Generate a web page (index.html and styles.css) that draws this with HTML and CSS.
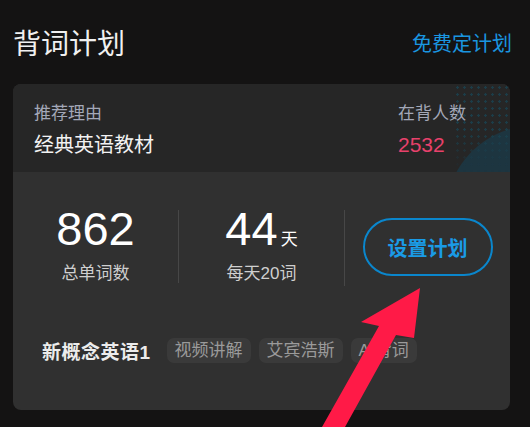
FILE: index.html
```html
<!DOCTYPE html>
<html>
<head>
   <meta charset="utf-8">
   <title>背词计划</title>
   <link rel="stylesheet" href="styles.css">
</head>
<body>
<div class="page">
   <div class="top">
      <h1 class="title">背词计划</h1>
      <a class="free" href="#">免费定计划</a>
   </div>

   <div class="card">
      <div class="card-hd">
         <div class="reason">
            <div class="label">推荐理由</div>
            <div class="value">经典英语教材</div>
         </div>
         <div class="learners">
            <div class="label">在背人数</div>
            <div class="count">2532</div>
         </div>
      </div>

      <div class="stats">
         <div class="stat">
            <div class="num">862</div>
            <div class="cap">总单词数</div>
         </div>
         <div class="stat">
            <div class="num">44<span class="unit">天</span></div>
            <div class="cap">每天20词</div>
         </div>
         <div class="stat">
            <a class="plan-btn" href="#">设置计划</a>
         </div>
      </div>

      <div class="book">
         <span class="book-name">新概念英语1</span>
         <span class="tag">视频讲解</span>
         <span class="tag">艾宾浩斯</span>
         <span class="tag">AI背词</span>
      </div>
   </div>
</div>

<!-- pointer drawn over the screenshot -->
<svg class="pointer" width="530" height="427" viewBox="0 0 530 427">
   <polygon fill="#ff1a47" points="420,288 361,322 379,326 322,427 345,427 396,335 414,338"/>
</svg>
</body>
</html>
```

FILE: styles.css
```css
body {
      margin: 0;
      background: #141313;
      font-family: "Liberation Sans", "Noto Sans CJK SC", sans-serif;
      color: #eee;
      overflow: hidden;
}
a {
      text-decoration: none;
}

.page {
      padding: 0 20px 0 13px;
}

.top {
      height: 84px;
      display: flex;
      align-items: center;
      justify-content: space-between;
}
.title {
      margin: 0;
      font-size: 28px;
      font-weight: normal;
      color: #f0f0f0;
}
.free {
      font-size: 20px;
      color: #1a96e0;
      margin-right: -2px;
}

.card {
      background: #303030;
      border-radius: 8px;
      overflow: hidden;
      height: 326px;
}

.card-hd {
      position: relative;
      height: 88px;
      box-sizing: border-box;
      padding: 19px 44px 0 21px;
      display: flex;
      justify-content: space-between;
      background: radial-gradient(circle at 522px 131px, #1d3540 89px, transparent 90px), #262626;
}
.card-hd:after {
      content: "";
      position: absolute;
      right: 0;
      top: 0;
      width: 56px;
      height: 88px;
      background-image: radial-gradient(circle, #1b4452 1px, transparent 1.5px);
      background-size: 7px 7px;
      opacity: 0.8;
      -webkit-mask-image: linear-gradient(to bottom, #000 50%, transparent);
      mask-image: linear-gradient(to bottom, #000 50%, transparent);
}
.reason, .learners {
      position: relative;
      z-index: 1;
}
.label {
      font-size: 17px;
      color: #a3a8b8;
      line-height: 22px;
}
.value {
      margin-top: 6px;
      font-size: 20px;
      line-height: 28px;
      color: #f2f2f2;
}
.count {
      margin-top: 6px;
      font-size: 21px;
      line-height: 28px;
      color: #e8416b;
}

.stats {
      display: flex;
      padding-top: 34px;
      height: 114px;
      box-sizing: border-box;
}
.stat {
      flex: 1;
      display: flex;
      flex-direction: column;
      align-items: center;
      border-left: 1px solid #474747;
      margin: 4px 0 0 0;
}
.stat:first-child {
      border-left: none;
}
.stat:first-child, .stat:nth-child(2) {
      height: 73px;
}
.num {
      margin-top: -4px;
      font-size: 47px;
      line-height: 46px;
      color: #fff;
}
.unit {
      font-size: 17px;
      line-height: 17px;
      margin-left: 3px;
}
.cap {
      margin-top: 10px;
      font-size: 17px;
      line-height: 24px;
      color: #cfcfcf;
}
.plan-btn {
      margin-top: 8px;
      width: 130px;
      height: 58px;
      box-sizing: border-box;
      border: 2px solid #0a86cc;
      border-radius: 29px;
      display: flex;
      align-items: center;
      justify-content: center;
      font-size: 20px;
      font-weight: bold;
      color: #1a9be6;
}

.book {
      display: flex;
      align-items: center;
      padding: 51px 0 0 29px;
}
.book-name {
      font-size: 19px;
      font-weight: bold;
      color: #ececec;
      margin-right: 16px;
      letter-spacing: 0.5px;
}
.tag {
      background: #3a3a3a;
      border-radius: 7px;
      padding: 0 8px;
      height: 25px;
      line-height: 25px;
      font-size: 17px;
      color: #9a9a9a;
      margin-right: 8px;
}

.pointer {
      position: absolute;
      left: 0;
      top: 0;
}
```
